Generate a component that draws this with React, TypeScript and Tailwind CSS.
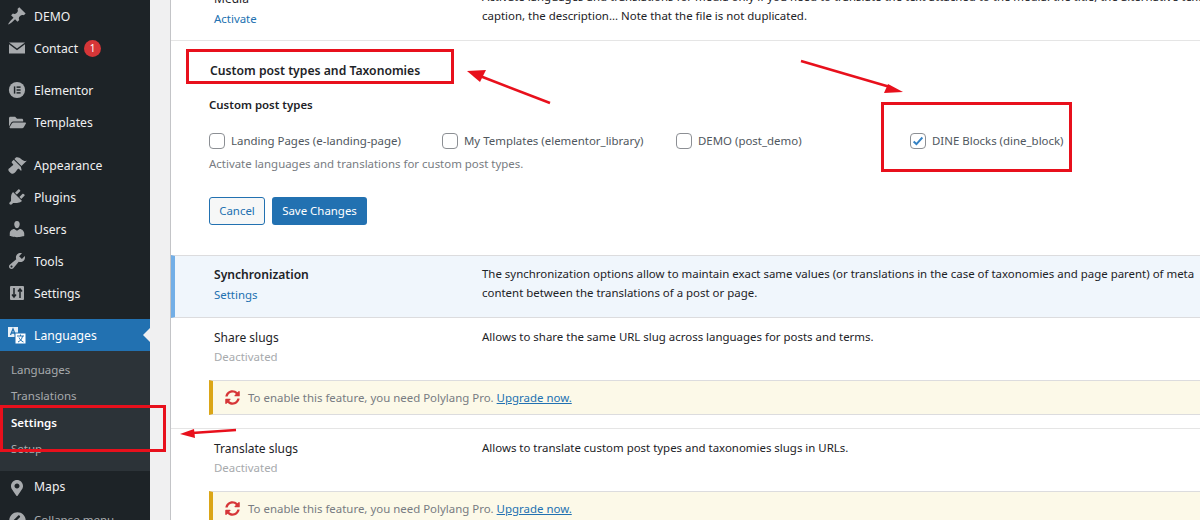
import React from 'react';
import { FaFolderOpen, FaMapMarkerAlt, FaChevronCircleLeft, FaSyncAlt } from 'react-icons/fa';

const font = { fontFamily: '"Noto Sans", sans-serif' };

const Dash = ({ d }: { d: string }) => (
  <svg viewBox="0 0 20 20" className="w-[20px] h-[20px]" fill="currentColor">
    <path d={d} />
  </svg>
);

const ElementorIcon = () => (
  <svg viewBox="0 0 20 20" className="w-[18px] h-[18px]">
    <circle cx="10" cy="10" r="9" fill="#a7aaad" />
    <rect x="6.5" y="6" width="1.6" height="8" fill="#1d2327" />
    <rect x="9.5" y="6" width="4.5" height="1.6" fill="#1d2327" />
    <rect x="9.5" y="9.2" width="4.5" height="1.6" fill="#1d2327" />
    <rect x="9.5" y="12.4" width="4.5" height="1.6" fill="#1d2327" />
  </svg>
);

const SettingsIcon = () => (
  <svg viewBox="0 0 20 20" className="w-[20px] h-[20px]">
    <rect x="3" y="3" width="14" height="14" rx="1" fill="#a7aaad" />
    <path d="M7 5v9M5 11.5l2 2.5 2-2.5M13 15V6M11 8.5l2-2.5 2 2.5" stroke="#1d2327" strokeWidth="1.5" fill="none" />
  </svg>
);

const LanguagesIcon = () => (
  <svg viewBox="0 0 20 20" className="w-[20px] h-[20px]">
    <path d="M1 2h10v10H1z" fill="#e8f0f7" />
    <path d="M3.5 10l2.5-6 2.5 6M4.5 8h3" stroke="#2271b1" strokeWidth="1.3" fill="none" />
    <path d="M8 8h11v11H8z" fill="#fff" stroke="#2271b1" strokeWidth="1" />
    <path d="M10 11h7M13.5 9.5V11M11 17c2.5-1 4-3 4.5-6M12 12.5c.8 2 2.5 3.7 4.5 4.5" stroke="#2271b1" strokeWidth="1" fill="none" />
  </svg>
);

const icons = {
  pin: 'M10.44 3.02l1.82-1.82 6.36 6.35-1.83 1.82c-1.05-.68-2.48-.57-3.41.36l-.75.75c-.92.93-1.04 2.35-.35 3.41l-1.83 1.82-2.41-2.41-2.8 2.79c-.42.42-3.38 2.71-3.8 2.29s1.86-3.39 2.28-3.81l2.79-2.79L4.1 9.36l1.83-1.82c1.05.69 2.48.57 3.4-.36l.75-.75c.93-.92 1.05-2.35.36-3.41z',
  mail: 'M2 4.5h16L10 10.5zM2 6.2v9.3h16V6.2l-8 6z',
  brush: 'M14.48 11.06L7.41 3.99l1.5-1.5c.5-.56 2.3-.47 3.51.32 1.21.8 1.43 1.28 2.91 2.1 1.18.64 2.45 1.26 4.45.85zm-.71.71L6.7 4.7 4.93 6.47c-.39.39-.39 1.02 0 1.41l1.06 1.06c.39.39.39 1.03 0 1.42-.6.6-1.43 1.11-2.21 1.69-.35.26-.7.53-1.01.84C1.43 13.23.4 14.85 2.85 17.3 5.3 19.75 6.9 18.7 8.24 17.34c.31-.31.58-.66.85-1.01.58-.78 1.09-1.61 1.69-2.21.39-.39 1.02-.39 1.41 0l1.06 1.06c.39.39 1.02.39 1.41 0z',
  plug: 'M13.11 4.36L9.87 7.6 8 5.73l3.24-3.24c.35-.34 1.05-.2 1.56.32.52.51.66 1.21.31 1.55zm-8 1.77l.91-1.12 9.01 9.01-1.19.84c-.71.71-2.63 1.16-3.82 1.16H6.14L4.9 17.26c-.59.59-1.54.59-2.12 0-.59-.58-.59-1.53 0-2.12l1.24-1.24v-3.88c0-1.13.4-3.19 1.09-3.89zm7.26 3.97l3.24-3.24c.34-.35 1.04-.21 1.55.31.52.51.66 1.21.31 1.55l-3.24 3.25z',
  user: 'M10 9.25c-2.27 0-2.73-3.44-2.73-3.44C7 4.02 7.82 2 9.97 2c2.16 0 2.98 2.02 2.71 3.81 0 0-.41 3.44-2.68 3.44zm0 2.57L12.72 10c2.39 0 4.52 2.33 4.52 4.53v2.49s-3.65 1.13-7.24 1.13c-3.65 0-7.24-1.13-7.24-1.13v-2.49c0-2.25 1.94-4.48 4.47-4.48z',
  tools: 'M16.68 9.77c-1.34 1.34-3.3 1.67-4.95.99l-5.41 6.52c-.99.99-2.59.99-3.58 0s-.99-2.59 0-3.57l6.52-5.42c-.68-1.65-.35-3.61.99-4.95 1.28-1.28 3.12-1.62 4.72-1.06l-2.89 2.89 2.82 2.82 2.86-2.87c.53 1.58.18 3.39-1.08 4.65zM3.81 16.21c.4.39 1.04.39 1.43 0 .4-.4.4-1.04 0-1.43-.39-.4-1.03-.4-1.43 0-.39.39-.39 1.03 0 1.43z',
};

const menu = [
  { label: 'DEMO', icon: <Dash d={icons.pin} />, h: 'h-[32px]' },
  { label: 'Contact', icon: <Dash d={icons.mail} />, h: 'h-[32px]', badge: '1' },
  { label: 'Elementor', icon: <ElementorIcon />, h: 'h-[32px] mt-[10px]' },
  { label: 'Templates', icon: <FaFolderOpen className="w-[17px] h-[17px]" />, h: 'h-[32px]' },
  { label: 'Appearance', icon: <Dash d={icons.brush} />, h: 'h-[32px] mt-[11px]' },
  { label: 'Plugins', icon: <Dash d={icons.plug} />, h: 'h-[32px]' },
  { label: 'Users', icon: <Dash d={icons.user} />, h: 'h-[32px]' },
  { label: 'Tools', icon: <Dash d={icons.tools} />, h: 'h-[32px]' },
  { label: 'Settings', icon: <SettingsIcon />, h: 'h-[32px]' },
];

const Sidebar = () => (
  <div className="w-[150px] shrink-0 bg-[#1d2327] text-[#f0f0f1] text-[12.2px] h-full overflow-hidden">
    {menu.map((m) => (
      <div key={m.label} className={`flex items-center ${m.h}`}>
        <div className="w-[34px] flex justify-center text-[#a7aaad]">{m.icon}</div>
        <span className="pt-[2px]">{m.label}</span>
        {m.badge && (
          <span className="ml-[6px] w-[17px] h-[17px] rounded-full bg-[#d63638] text-white text-[10px] flex items-center justify-center">
            {m.badge}
          </span>
        )}
      </div>
    ))}
    <div className="relative mt-[10px] h-[32px] bg-[#2271b1] text-white flex items-center">
      <div className="w-[34px] flex justify-center">
        <LanguagesIcon />
      </div>
      <span className="pt-[2px]">Languages</span>
      <div className="absolute right-0 top-[9px] border-y-[7px] border-y-transparent border-r-[7px] border-r-[#f0f0f1]" />
    </div>
    <div className="bg-[#2c3338] h-[120px] pt-[6px] text-[11.5px] text-[#a7aaad]">
      <div className="h-[26px] pl-[11px] flex items-center">Languages</div>
      <div className="h-[26px] pl-[11px] flex items-center">Translations</div>
      <div className="h-[27px] pl-[11px] flex items-center text-white font-semibold">Settings</div>
      <div className="h-[26px] pl-[11px] flex items-center">Setup</div>
    </div>
    <div className="h-[32px] mt-[1px] flex items-center">
      <div className="w-[34px] flex justify-center text-[#a7aaad]">
        <FaMapMarkerAlt className="w-[16px] h-[16px]" />
      </div>
      <span className="-mt-[1px]">Maps</span>
    </div>
    <div className="h-[32px] flex items-center text-[#a7aaad] text-[11.5px]">
      <div className="w-[34px] flex justify-center">
        <FaChevronCircleLeft className="w-[17px] h-[17px]" />
      </div>
      <span>Collapse menu</span>
    </div>
  </div>
);

const Check = ({ on, label, w }: { on?: boolean; label: string; w: string }) => (
  <label className={`flex items-center ${w}`}>
    <span
      className={`w-[16px] h-[16px] shrink-0 rounded-[4px] border border-[#8c8f94] bg-white flex items-center justify-center ${
        on ? 'bg-[#f6f7f7]' : ''
      }`}
    >
      {on && (
        <svg viewBox="0 0 16 16" className="w-[14px] h-[14px]">
          <path d="M3 8.5l3.2 3L13 4" stroke="#3582c4" strokeWidth="2.2" fill="none" />
        </svg>
      )}
    </span>
    <span className="ml-[6px] text-[#50575e] whitespace-nowrap">{label}</span>
  </label>
);

const Notice = () => (
  <div className="ml-[38px] h-[35px] border-y border-y-[#dcdcde] border-l-4 border-l-[#dba617] bg-[#fcf9e8] flex items-center pl-[12px] text-[#787c82]">
    <FaSyncAlt className="w-[15px] h-[15px] text-[#d63638] mr-[8px]" />
    <span>
      To enable this feature, you need Polylang Pro.{' '}
      <span className="text-[#2271b1] underline">Upgrade now.</span>
    </span>
  </div>
);

const Row = ({ title, desc }: { title: string; desc: string }) => (
  <div className="h-[111px] border-b border-[#e5e5e5]">
    <div className="flex pl-[43px] pt-[10px]">
      <div className="w-[268px] shrink-0">
        <div className="text-[#1d2327] text-[12px] leading-[18px] pt-[1px]">{title}</div>
        <div className="text-[#a7aaad] leading-[18px] mt-[1px]">Deactivated</div>
      </div>
      <div className="text-[#1d2327] leading-[18px]">{desc}</div>
    </div>
    <div className="mt-[14px]">
      <Notice />
    </div>
  </div>
);

const Overlays = () => (
  <>
    <div className="absolute left-[186px] top-[49px] w-[268px] h-[35px] border-[3px] border-[#e8101c]" />
    <div className="absolute left-[881px] top-[102px] w-[191px] h-[70px] border-[3px] border-[#e8101c]" />
    <div className="absolute left-0 top-[405px] w-[166px] h-[47px] border-[3px] border-[#e8101c]" />
    <svg className="absolute left-0 top-0 w-[1200px] h-[520px] pointer-events-none" viewBox="0 0 1200 520">
      <path d="M550 103L480 76" stroke="#e8101c" strokeWidth="2.5" />
      <path d="M467 71l19-1-6 12z" fill="#e8101c" />
      <path d="M801 61L890 87" stroke="#e8101c" strokeWidth="2.5" />
      <path d="M903 92l-19 1 4-9z" fill="#e8101c" />
      <path d="M236 430L192 433" stroke="#e8101c" strokeWidth="2.5" />
      <path d="M180 434l14-5 1 9z" fill="#e8101c" />
    </svg>
  </>
);

export default function App() {
  return (
    <div className="relative w-[1200px] h-[520px] overflow-hidden flex text-[11.45px]" style={font}>
      <Sidebar />
      <div className="flex-1 bg-[#f0f0f1] pl-[20px]">
        <div className="h-full bg-white border-l border-[#c3c4c7] overflow-hidden">
          {/* media row is cut off by the top of the shot */}
          <div className="h-[41px] border-b border-[#e5e5e5] overflow-hidden">
            <div className="flex pl-[43px] -mt-[13px] whitespace-nowrap">
              <div className="w-[268px] shrink-0 pt-[2px]">
                <div className="text-[#1d2327] text-[12px] leading-[20px]">Media</div>
                <div className="text-[#2271b1] leading-[20px]">Activate</div>
              </div>
              <div className="text-[#1d2327] leading-[19px]">
                Activate languages and translations for media only if you need to translate the text attached to the media: the title, the alternative text, the
                <br />
                caption, the description... Note that the file is not duplicated.
              </div>
            </div>
          </div>
          <div className="h-[214px] pl-[38px] pt-[22px]">
            <div className="pl-[1px] font-semibold text-[12.2px] text-[#1d2327] leading-[16px]">Custom post types and Taxonomies</div>
            <div className="mt-[18px] font-semibold text-[#1d2327] leading-[16px]">Custom post types</div>
            <div className="mt-[11px] flex h-[34px]">
              <Check label="Landing Pages (e-landing-page)" w="w-[233px]" />
              <Check label="My Templates (elementor_library)" w="w-[234px]" />
              <Check label="DEMO (post_demo)" w="w-[234px]" />
              <Check on label="DINE Blocks (dine_block)" w="w-[160px]" />
            </div>
            <div className="mt-[-3px] text-[#787c82] leading-[18px]">Activate languages and translations for custom post types.</div>
            <div className="mt-[24px] flex gap-[7px]">
              <div className="w-[56px] h-[28px] rounded-[3px] border border-[#2271b1] bg-[#f6f7f7] text-[#2271b1] flex items-center justify-center">Cancel</div>
              <div className="w-[95px] h-[28px] rounded-[3px] bg-[#2271b1] text-white flex items-center justify-center">Save Changes</div>
            </div>
          </div>
          <div className="h-[63px] border-y border-[#dcdcde] border-l-4 border-l-[#72aee6] bg-[#f0f6fc] flex pl-[39px] pt-[9px] whitespace-nowrap">
            <div className="w-[268px] shrink-0 pt-[1px]">
              <div className="font-semibold text-[12.1px] text-[#1d2327] leading-[18px]">Synchronization</div>
              <div className="text-[#2271b1] leading-[18px] mt-[2px]">Settings</div>
            </div>
            <div className="text-[#1d2327] leading-[19px] -mt-[1px]">
              The synchronization options allow to maintain exact same values (or translations in the case of taxonomies and page parent) of meta
              <br />
              content between the translations of a post or page.
            </div>
          </div>
          <Row title="Share slugs" desc="Allows to share the same URL slug across languages for posts and terms." />
          <Row title="Translate slugs" desc="Allows to translate custom post types and taxonomies slugs in URLs." />
        </div>
      </div>
      <Overlays />
    </div>
  );
}
